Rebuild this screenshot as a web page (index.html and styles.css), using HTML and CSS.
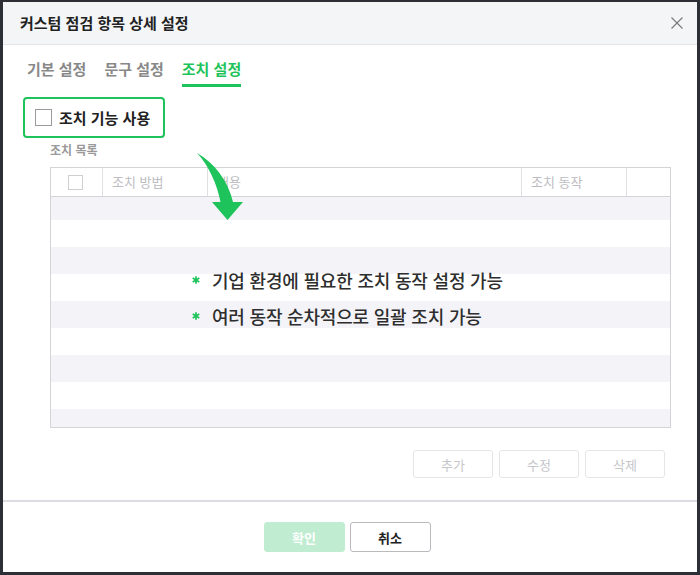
FILE: index.html
```html
<!DOCTYPE html>
<html lang="ko">
<head>
    <meta charset="UTF-8">
    <title>커스텀 점검 항목 상세 설정</title>
    <link rel="stylesheet" href="styles.css">
</head>
<body>
    <div class="dialog">
        <div class="dialog-header">
            <h1 class="dialog-title">커스텀 점검 항목 상세 설정</h1>
            <button class="close-btn" aria-label="닫기">
                <svg width="12" height="12" viewBox="0 0 12 12"><path d="M0.5 0.5 L11.5 11.5 M11.5 0.5 L0.5 11.5" stroke="#777" stroke-width="1.1" fill="none"/></svg>
            </button>
        </div>

        <div class="dialog-body">
            <div class="tabs">
                <div class="tab">기본 설정</div>
                <div class="tab">문구 설정</div>
                <div class="tab active">조치 설정</div>
            </div>

            <label class="use-toggle">
                <span class="checkbox"></span>
                <span class="use-label">조치 기능 사용</span>
            </label>

            <div class="list-title">조치 목록</div>

            <div class="table-wrap">
                <div class="table">
                    <div class="thead">
                        <div class="th th-check"><span class="checkbox small"></span></div>
                        <div class="th">조치 방법</div>
                        <div class="th">내용</div>
                        <div class="th">조치 동작</div>
                        <div class="th"></div>
                    </div>
                    <div class="tbody">
                        <div class="row odd first"></div>
                        <div class="row"></div>
                        <div class="row odd"></div>
                        <div class="row"></div>
                        <div class="row odd"></div>
                        <div class="row"></div>
                        <div class="row odd"></div>
                        <div class="row"></div>
                        <div class="row odd"></div>
                    </div>
                </div>

                <!-- callout drawn over the empty table -->
                <svg class="callout-arrow" width="50" height="72" viewBox="195 150 50 72">
                    <path d="M197 153 C214 163 228 180 233 202 L243 202 L227.5 220 L212 202 L220.5 202 C217 184 209 166 197 153 Z" fill="#1fc35b"/>
                </svg>
                <ul class="callout">
                    <li><svg class="star" width="8" height="8" viewBox="0 0 8 8"><path d="M4 0.3 V7.7 M0.7 2.1 L7.3 5.9 M7.3 2.1 L0.7 5.9" stroke="#1fc35b" stroke-width="1.7"/></svg>기업 환경에 필요한 조치 동작 설정 가능</li>
                    <li><svg class="star" width="8" height="8" viewBox="0 0 8 8"><path d="M4 0.3 V7.7 M0.7 2.1 L7.3 5.9 M7.3 2.1 L0.7 5.9" stroke="#1fc35b" stroke-width="1.7"/></svg>여러 동작 순차적으로 일괄 조치 가능</li>
                </ul>
            </div>

            <div class="table-actions">
                <button class="btn-ghost">추가</button>
                <button class="btn-ghost">수정</button>
                <button class="btn-ghost">삭제</button>
            </div>
        </div>

        <div class="dialog-footer">
            <button class="btn-primary" disabled>확인</button>
            <button class="btn-default">취소</button>
        </div>
    </div>
</body>
</html>
```

FILE: styles.css
```css
:root {
    --green: #1fc35b;
    --green-light: #c0edd1;
    --text: #222;
    --gray: #888;
    --gray-light: #d3d4d8;
    --stripe: #f4f4f8;
}

* {
    margin: 0;
    padding: 0;
    box-sizing: border-box;
    font-family: "Noto Sans CJK KR", "Noto Sans", sans-serif;
}

body {
    background: #2c3036;
    padding: 2px 3px 3px 3px;
}

.dialog {
    width: 694px;
    height: 570px;
    background: #fff;
    display: flex;
    flex-direction: column;
}

.dialog-header {
    height: 43px;
    background: #f4f5f7;
    border-bottom: 1px solid #e4e5e9;
    display: flex;
    align-items: center;
    justify-content: space-between;
    padding: 0 14px 0 17px;
}

.dialog-title {
    font-size: 15px;
    font-weight: 600;
    color: var(--text);
    line-height: 20px;
}

.close-btn {
    background: none;
    border: none;
    width: 12px;
    height: 12px;
    display: flex;
    cursor: pointer;
}

.dialog-body {
    flex: 1;
    padding: 0 26px 0 20px;
}

.tabs {
    display: flex;
    gap: 18px;
    margin-left: 4px;
}

.tab {
    font-size: 15px;
    font-weight: 700;
    line-height: 20px;
    color: var(--gray);
    padding-top: 14px;
    padding-bottom: 5px;
    border-bottom: 3px solid transparent;
}

.tab.active {
    color: var(--green);
    border-bottom-color: var(--green);
}

.use-toggle {
    margin-top: 10px;
    display: inline-flex;
    align-items: center;
    gap: 7px;
    height: 41px;
    padding: 0 13px 0 10px;
    border: 2px solid var(--green);
    border-radius: 4px;
}

.checkbox {
    display: inline-block;
    width: 17px;
    height: 17px;
    border: 1px solid #9a9a9a;
    background: #fff;
}

.checkbox.small {
    width: 15px;
    height: 15px;
    border-color: #cfcfd3;
}

.use-label {
    font-size: 15px;
    font-weight: 700;
    color: var(--text);
    line-height: 20px;
}

.list-title {
    margin: 4px 0 0 27px;
    font-size: 12px;
    font-weight: 700;
    color: #999;
    line-height: 16px;
}

.table-wrap {
    position: relative;
    margin: 9px 0 0 27px;
}

.table {
    border: 1px solid var(--gray-light);
}

.thead {
    display: grid;
    grid-template-columns: 51px 105px 314px 105px 1fr;
    height: 29px;
    border-bottom: 1px solid var(--gray-light);
}

.th {
    font-size: 13px;
    color: #bdbdc2;
    line-height: 28px;
    padding-left: 9px;
    border-left: 1px solid #e0e0e4;
}

.th-check {
    border-left: none;
    padding-left: 17px;
    display: flex;
    align-items: center;
}

.tbody {
    height: 230px;
    overflow: hidden;
}

.row {
    height: 27px;
}

.row.first {
    height: 23px;
}

.row.odd {
    background: var(--stripe);
}

.callout-arrow {
    position: absolute;
    left: 145px;
    top: -17px;
}

.callout {
    position: absolute;
    left: 142px;
    top: 99px;
    list-style: none;
}

.callout li {
    display: flex;
    align-items: center;
    font-size: 18px;
    font-weight: 500;
    letter-spacing: -0.2px;
    color: #2e2e2e;
    line-height: 28px;
    margin-bottom: 8px;
}

.star {
    margin-right: 12px;
}

.table-actions {
    display: flex;
    justify-content: flex-end;
    gap: 6px;
    margin-top: 22px;
    padding-right: 6px;
}

.btn-ghost {
    width: 80px;
    height: 28px;
    background: #fff;
    border: 1px solid #e6e6e9;
    border-radius: 3px;
    font-size: 13px;
    color: #c6c6ca;
}

.dialog-footer {
    height: 72px;
    border-top: 2px solid #dcdce2;
    display: flex;
    justify-content: center;
    gap: 5px;
    padding: 20px 6px 0 0;
}

.dialog-footer button {
    width: 81px;
    height: 30px;
    border-radius: 3px;
    font-size: 13px;
    font-weight: 700;
}

.btn-primary {
    background: var(--green-light);
    border: 1px solid var(--green-light);
    color: #fff;
}

.btn-default {
    background: #fff;
    border: 1px solid #b9b9be;
    color: var(--text);
}
```
